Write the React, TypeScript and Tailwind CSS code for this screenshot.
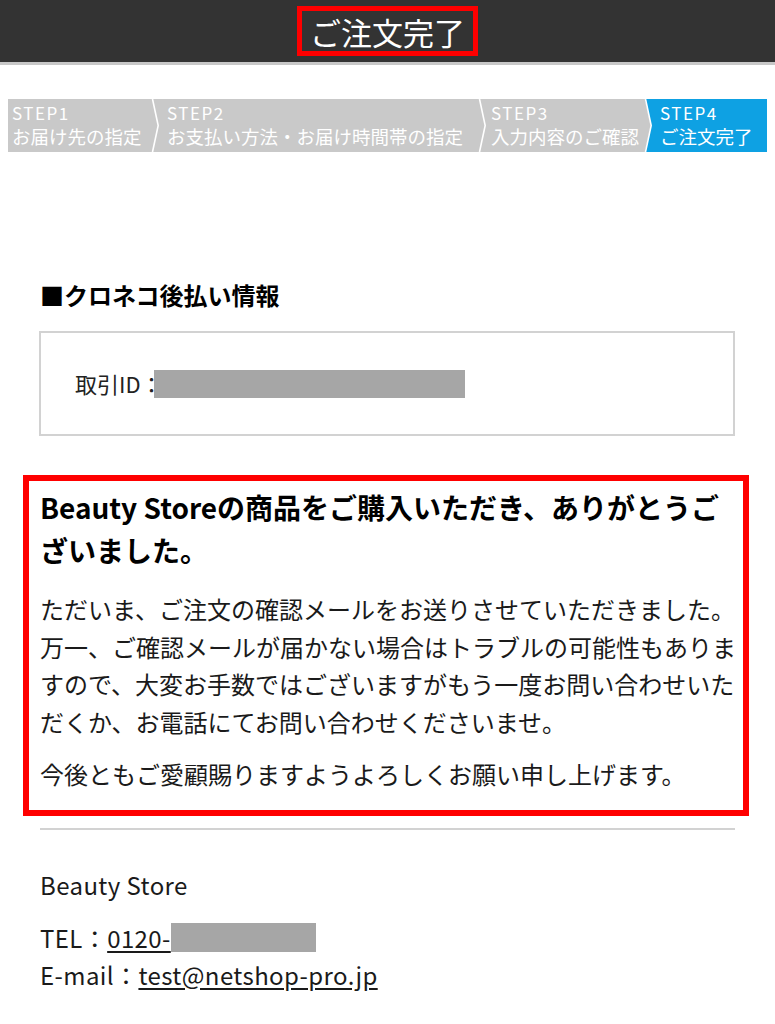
import type { ReactNode } from 'react'

const font = "font-['Noto_Sans_CJK_JP','Noto_Sans',sans-serif]"

type Step = { no: string; label: string; width: string; pad: string; active?: boolean }

const steps: Step[] = [
  { no: 'STEP1', label: 'お届け先の指定', width: 'w-[143px]', pad: 'pl-[4px]' },
  { no: 'STEP2', label: 'お支払い方法・お届け時間帯の指定', width: 'w-[319px]', pad: 'pl-[8px]' },
  { no: 'STEP3', label: '入力内容のご確認', width: 'w-[158px]', pad: 'pl-[5px]' },
  { no: 'STEP4', label: 'ご注文完了', width: 'w-[115px]', pad: 'pl-[8px]', active: true },
]

function Chevron({ left, right }: { left: string; right: string }) {
  return (
    <svg width="8" height="53" viewBox="0 0 8 53" className="block shrink-0">
      <rect x="0" y="0" width="8" height="53" fill={right} />
      <polygon points="0,0 1,0 7,26.5 1,53 0,53" fill={left} />
      <polyline points="1.5,0 7.2,26.5 1.5,53" fill="none" stroke="#fff" strokeWidth="1.6" />
    </svg>
  )
}

function StepBar() {
  return (
    <div className="flex h-[53px] ml-[8px]">
      {steps.map((s, i) => (
        <div key={s.no} className="flex">
          {i > 0 && <Chevron left="#c9c9c9" right={s.active ? '#0ea1e3' : '#c9c9c9'} />}
          <div
            className={`${s.width} ${s.pad} flex flex-col justify-center text-white ${
              s.active ? 'bg-[#0ea1e3]' : 'bg-[#c9c9c9]'
            }`}
          >
            <span className="text-[17px] leading-[22px] tracking-[1.5px]">{s.no}</span>
            <span className="text-[18.5px] leading-[25px] whitespace-nowrap">{s.label}</span>
          </div>
        </div>
      ))}
    </div>
  )
}

function Redacted({ className }: { className: string }) {
  return <span className={`inline-block bg-[#a6a6a6] align-middle ${className}`} />
}

function P({ children, className = '' }: { children: ReactNode; className?: string }) {
  return <p className={`text-[24px] leading-[37.5px] text-[#1a1a1a] whitespace-nowrap ${className}`}>{children}</p>
}

export default function App() {
  return (
    <div className={`${font} bg-white min-h-[1024px] w-[775px] overflow-hidden`}>
      {/* Header */}
      <header className="h-[62px] bg-[#333] border-b-[3px] border-[#c8c8c8] box-content flex items-center justify-center">
        <div className="h-[50px] border-[5px] border-[#f00] px-[8px] flex items-center">
          <h1 className="text-[31px] leading-none text-white">ご注文完了</h1>
        </div>
      </header>

      <div className="mt-[34px]">
        <StepBar />
      </div>

      <main className="px-[40px]">
        <h2 className="mt-[127px] text-[24px] leading-[32px] font-bold text-black">■クロネコ後払い情報</h2>

        <div className="mt-[20px] h-[105px] border-2 border-[#d2d2d2] -ml-px flex items-center pl-[34px]">
          <span className="text-[22px] text-[#222] flex items-center">
            取引ID：<Redacted className="w-[311px] h-[28px] -ml-[9px]" />
          </span>
        </div>

        {/* Thanks message */}
        <section className="mt-[39px] -ml-[17px] -mr-[14px] border-[6px] border-[#f00] pl-[11px] pt-[5px] pb-[17px]">
          <h3 className="text-[28px] leading-[43px] font-bold text-black whitespace-nowrap">
            Beauty Storeの商品をご購入いただき、ありがとうご
            <br />
            ざいました。
          </h3>
          <P className="mt-[18px]">
            ただいま、ご注文の確認メールをお送りさせていただきました。
            <br />
            万一、ご確認メールが届かない場合はトラブルの可能性もありま
            <br />
            すので、大変お手数ではございますがもう一度お問い合わせいた
            <br />
            だくか、お電話にてお問い合わせくださいませ。
          </P>
          <P className="mt-[15px]">今後ともご愛顧賜りますようよろしくお願い申し上げます。</P>
        </section>

        <hr className="mt-[12px] border-0 h-[2px] bg-[#d2d2d2]" />

        {/* Shop info */}
        <footer className="mt-[36px] text-[24px] tracking-[0.4px] text-[#1a1a1a]">
          <p className="leading-[37px]">Beauty Store</p>
          <p className="mt-[16px] leading-[37px] flex items-center">
            TEL：<a className="underline underline-offset-[3px]">0120-</a>
            <Redacted className="w-[145px] h-[29px]" />
          </p>
          <p className="leading-[37px]">
            E-mail：<a className="underline underline-offset-[3px]">test@netshop-pro.jp</a>
          </p>
        </footer>
      </main>
    </div>
  )
}
